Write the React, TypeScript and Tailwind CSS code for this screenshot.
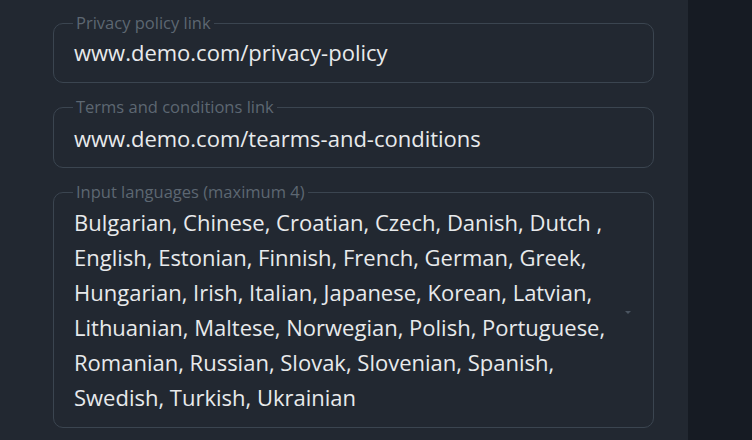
import React from "react";

const languages = [
  "Bulgarian, Chinese, Croatian, Czech, Danish, Dutch ,",
  "English, Estonian, Finnish, French, German, Greek,",
  "Hungarian, Irish, Italian, Japanese, Korean, Latvian,",
  "Lithuanian, Maltese, Norwegian, Polish, Portuguese,",
  "Romanian, Russian, Slovak, Slovenian, Spanish,",
  "Swedish, Turkish, Ukrainian",
];

function Field({ label, children, className = "" }: { label: string; children: React.ReactNode; className?: string }) {
  return (
    <fieldset className={"rounded-[10px] border border-[#3b4550] px-[20px] " + className}>
      <legend className="ml-[-1px] px-[3px] text-[16.5px] leading-[18px] text-[#5d6772]">{label}</legend>
      {children}
    </fieldset>
  );
}

export default function App() {
  return (
    <div
      className="flex h-[440px] w-[752px] overflow-hidden bg-[#161b23]"
      style={{ fontFamily: '"Open Sans", "Noto Sans", sans-serif' }}
    >
      <div className="flex w-[688px] flex-col gap-[15px] bg-[#222831] pl-[53px] pr-[34px] pt-[14px]">
        <Field label="Privacy policy link" className="pb-[12px] pt-[3px]">
          <div className="text-[22px] leading-[35px] text-[#e8eaec]">www.demo.com/privacy-policy</div>
        </Field>
        <Field label="Terms and conditions link" className="pb-[11px] pt-[5px]">
          <div className="text-[22px] leading-[35px] text-[#e8eaec]">www.demo.com/tearms-and-conditions</div>
        </Field>
        <Field label="Input languages (maximum 4)" className="pb-[12px] pt-[4px]">
          <div className="flex items-center">
            <div className="flex-1 text-[22px] leading-[35px] text-[#e8eaec]">
              {languages.map((line) => (
                <div key={line} className="whitespace-nowrap">{line}</div>
              ))}
            </div>
            <svg width="6" height="4" viewBox="0 0 6 4" className="mr-[2px] mt-[6px]">
              <path d="M0 0h6L3 3z" fill="#4b5561" />
            </svg>
          </div>
        </Field>
      </div>
    </div>
  );
}
